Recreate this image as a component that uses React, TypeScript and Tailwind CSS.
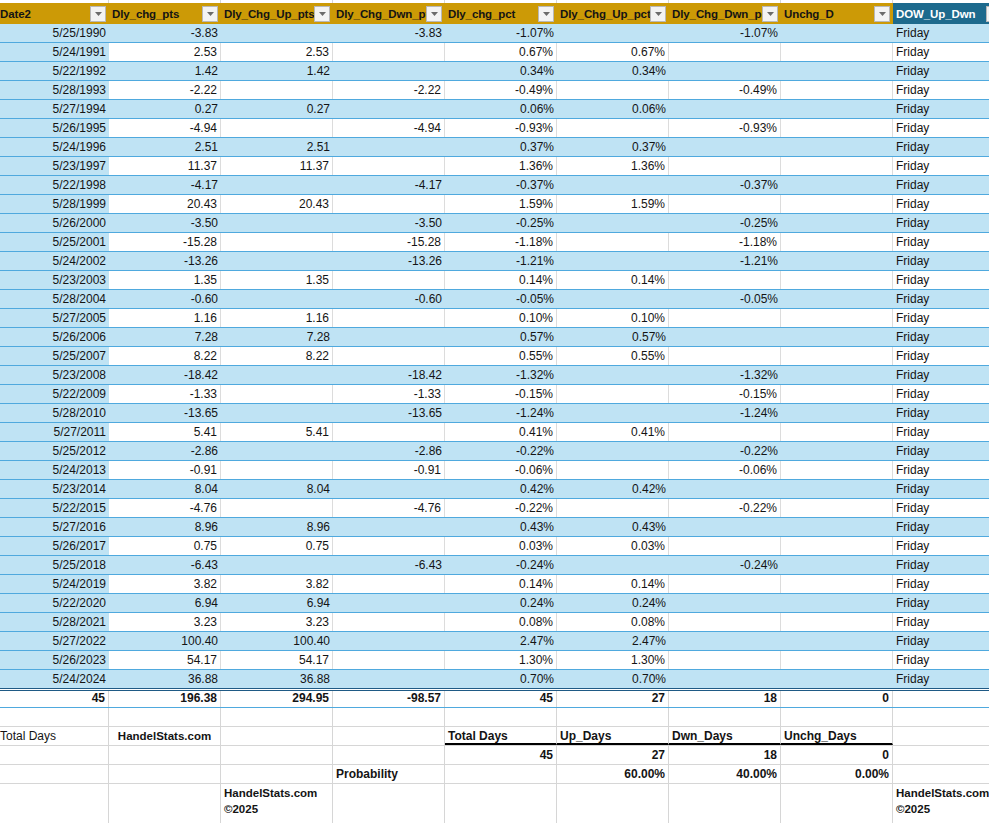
import React from 'react';

const rows: [string, string, string][] = [
  ['5/25/1990', '-3.83', '-1.07%'],
  ['5/24/1991', '2.53', '0.67%'],
  ['5/22/1992', '1.42', '0.34%'],
  ['5/28/1993', '-2.22', '-0.49%'],
  ['5/27/1994', '0.27', '0.06%'],
  ['5/26/1995', '-4.94', '-0.93%'],
  ['5/24/1996', '2.51', '0.37%'],
  ['5/23/1997', '11.37', '1.36%'],
  ['5/22/1998', '-4.17', '-0.37%'],
  ['5/28/1999', '20.43', '1.59%'],
  ['5/26/2000', '-3.50', '-0.25%'],
  ['5/25/2001', '-15.28', '-1.18%'],
  ['5/24/2002', '-13.26', '-1.21%'],
  ['5/23/2003', '1.35', '0.14%'],
  ['5/28/2004', '-0.60', '-0.05%'],
  ['5/27/2005', '1.16', '0.10%'],
  ['5/26/2006', '7.28', '0.57%'],
  ['5/25/2007', '8.22', '0.55%'],
  ['5/23/2008', '-18.42', '-1.32%'],
  ['5/22/2009', '-1.33', '-0.15%'],
  ['5/28/2010', '-13.65', '-1.24%'],
  ['5/27/2011', '5.41', '0.41%'],
  ['5/25/2012', '-2.86', '-0.22%'],
  ['5/24/2013', '-0.91', '-0.06%'],
  ['5/23/2014', '8.04', '0.42%'],
  ['5/22/2015', '-4.76', '-0.22%'],
  ['5/27/2016', '8.96', '0.43%'],
  ['5/26/2017', '0.75', '0.03%'],
  ['5/25/2018', '-6.43', '-0.24%'],
  ['5/24/2019', '3.82', '0.14%'],
  ['5/22/2020', '6.94', '0.24%'],
  ['5/28/2021', '3.23', '0.08%'],
  ['5/27/2022', '100.40', '2.47%'],
  ['5/26/2023', '54.17', '1.30%'],
  ['5/24/2024', '36.88', '0.70%'],
];

const headers = [
  'Date2',
  'Dly_chg_pts',
  'Dly_Chg_Up_pts',
  'Dly_Chg_Dwn_pts',
  'Dly_chg_pct',
  'Dly_Chg_Up_pct',
  'Dly_Chg_Dwn_pct',
  'Unchg_D',
];

const colW = (i: number) => (i === 0 ? 'w-[109px]' : 'w-[112px]');

const FilterButton = () => (
  <div className="w-4 h-4 shrink-0 bg-[#f3f3f3] border border-[#b8b8b8] flex items-center justify-center">
    <svg width="7" height="4" viewBox="0 0 7 4">
      <path d="M0 0h7L3.5 4z" fill="#6b6b6b" />
    </svg>
  </div>
);

const Cell = ({
  i,
  children,
  className = '',
}: {
  i: number;
  children?: React.ReactNode;
  className?: string;
}) => (
  <div className={`${colW(i)} shrink-0 h-full px-[3px] truncate ${className}`}>{children}</div>
);

const App = () => {
  return (
    <div
      className="w-[989px] h-[823px] overflow-hidden bg-white text-[12px] text-[#141414] leading-[18px]"
      style={{ fontFamily: '"Liberation Sans", Arial, sans-serif' }}
    >
      {/* clipped row above the header */}
      <div className="flex h-[3px]">
        {Array.from({ length: 9 }).map((_, i) => (
          <div key={i} className={`${colW(i)} shrink-0 border-r border-[#d6d6d6]`} />
        ))}
      </div>

      {/* table header */}
      <div className="flex h-[21px] font-bold text-[11.5px] tracking-[-0.1px]">
        {headers.map((h, i) => (
          <div
            key={h}
            className={`${colW(i)} shrink-0 bg-[#cc9a06] flex items-center pr-[3px] ${i === 0 ? 'pl-0' : 'pl-[3px]'}`}
          >
            <span className="flex-1 overflow-hidden whitespace-nowrap">{h}</span>
            <FilterButton />
          </div>
        ))}
        <div className="w-[112px] shrink-0 bg-[#1d6a8d] text-white flex items-center pl-[3px] pr-[3px]">
          <span className="flex-1 overflow-hidden whitespace-nowrap">DOW_Up_Dwn</span>
          <FilterButton />
        </div>
      </div>

      {/* data rows */}
      {rows.map(([date, pts, pct], r) => {
        const up = !pts.startsWith('-');
        const cells = [date, pts, up ? pts : '', up ? '' : pts, pct, up ? pct : '', up ? '' : pct, ''];
        const blue = r % 2 === 0;
        return (
          <div key={date} className="flex h-[19px] border-b border-[#4fa9de]">
            {cells.map((c, i) => (
              <Cell
                key={i}
                i={i}
                className={`text-right ${
                  i === 0 || blue ? 'bg-[#bfe3f4]' : 'bg-white border-r border-[#dcdcdc]'
                }`}
              >
                {c}
              </Cell>
            ))}
            <Cell i={8} className={blue ? 'bg-[#bfe3f4]' : 'bg-white'}>
              Friday
            </Cell>
          </div>
        );
      })}

      {/* totals */}
      <div className="flex h-[20px] -mt-px border-t-[3px] border-double border-[#1f5a85] border-b border-b-[#4fa9de] font-bold leading-[15px]">
        {['45', '196.38', '294.95', '-98.57', '45', '27', '18', '0', ''].map((c, i) => (
          <Cell key={i} i={i} className="text-right border-r border-[#d6d6d6]">
            {c}
          </Cell>
        ))}
      </div>

      {/* summary block */}
      <div className="flex h-[19px] border-b border-[#d6d6d6]">
        {Array.from({ length: 9 }).map((_, i) => (
          <Cell key={i} i={i} className="border-r border-[#d6d6d6]" />
        ))}
      </div>

      <div className="flex h-[19px] border-b border-[#d6d6d6]">
        <Cell i={0} className="border-r border-[#d6d6d6] pl-0">
          Total Days
        </Cell>
        <Cell i={1} className="border-r border-[#d6d6d6] font-bold text-[11.5px] text-center">
          HandelStats.com
        </Cell>
        <Cell i={2} className="border-r border-[#d6d6d6]" />
        <Cell i={3} className="border-r border-[#d6d6d6]" />
        {['Total Days', 'Up_Days', 'Dwn_Days', 'Unchg_Days'].map((t, k) => (
          <Cell key={t} i={4 + k} className="border-b-2 border-b-black border-r border-r-[#d6d6d6] font-bold">
            {t}
          </Cell>
        ))}
        <Cell i={8} className="border-r border-[#d6d6d6]" />
      </div>

      <div className="flex h-[19px] border-b border-[#d6d6d6] font-bold">
        {['', '', '', '', '45', '27', '18', '0', ''].map((c, i) => (
          <Cell key={i} i={i} className="text-right border-r border-[#d6d6d6]">
            {c}
          </Cell>
        ))}
      </div>

      <div className="flex h-[19px] border-b border-[#d6d6d6] font-bold leading-[19px]">
        {['', '', '', 'Probability', '', '60.00%', '40.00%', '0.00%', ''].map((c, i) => (
          <Cell key={i} i={i} className={`border-r border-[#d6d6d6] ${i > 4 ? 'text-right' : ''}`}>
            {c}
          </Cell>
        ))}
      </div>

      <div className="flex h-[40px] font-bold text-[11.5px] leading-[16px]">
        {Array.from({ length: 9 }).map((_, i) => (
          <div key={i} className={`${colW(i)} shrink-0 h-full px-[3px] pt-px border-r border-[#d6d6d6]`}>
            {(i === 2 || i === 8) && (
              <>
                <div>HandelStats.com</div>
                <div>©2025</div>
              </>
            )}
          </div>
        ))}
      </div>
    </div>
  );
};

export default App;
